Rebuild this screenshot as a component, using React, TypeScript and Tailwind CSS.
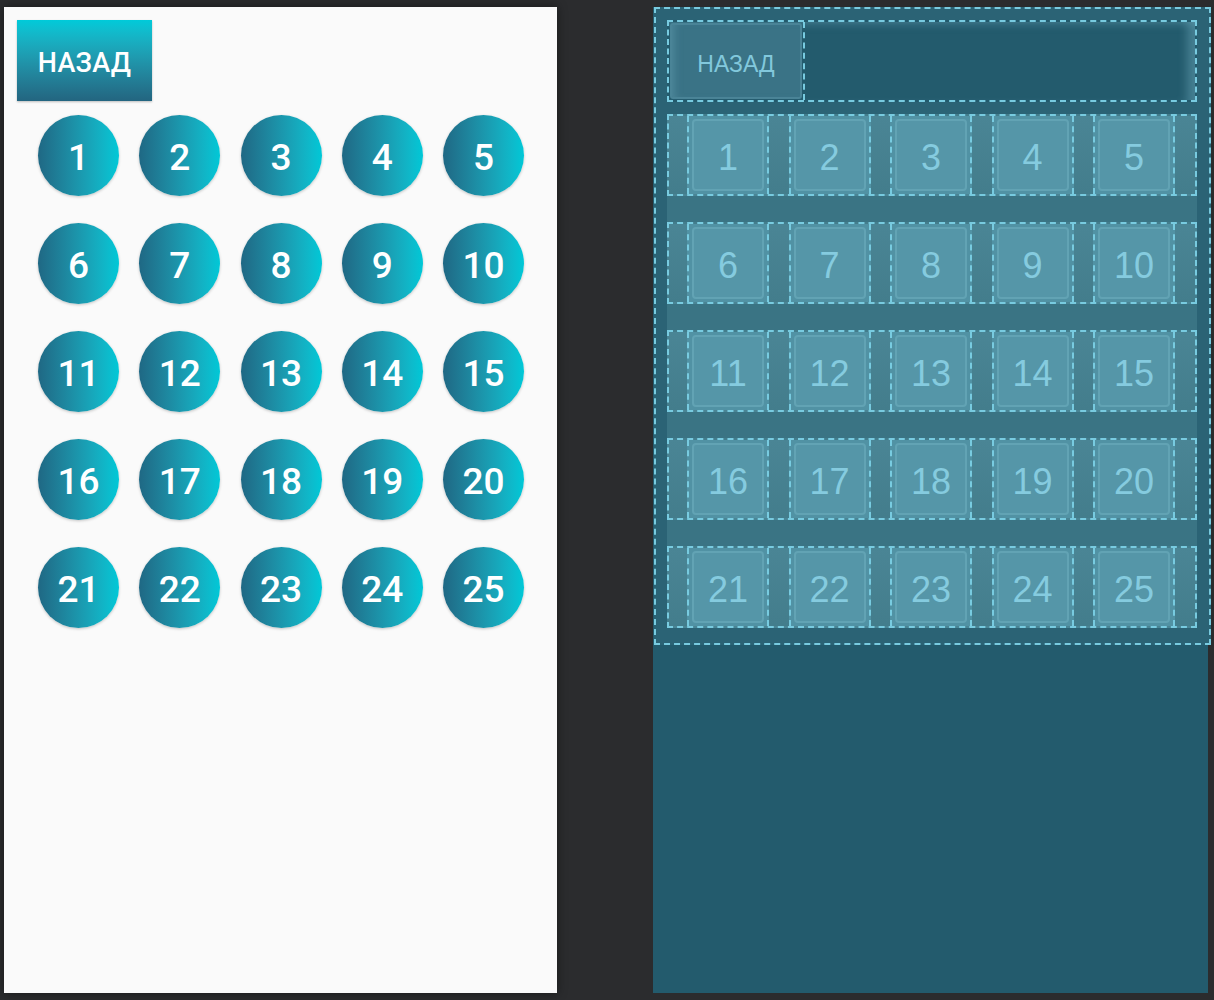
import React from "react";

const rows = [0, 1, 2, 3, 4].map((r) => [1, 2, 3, 4, 5].map((c) => r * 5 + c));

export default function App() {
  return (
    <div className="w-[1214px] h-[1000px] bg-[#2b2c2e] flex items-start pt-[7px] pl-[4px] overflow-hidden">
      {/* Design view */}
      <div
        className="w-[553px] h-[986px] shrink-0 bg-[#fafafa] shadow-[0_0_10px_rgba(0,0,0,0.45)] flex flex-col items-start pt-[13px] pl-[13px]"
        style={{ fontFamily: "Roboto, 'Noto Sans', sans-serif" }}
      >
        <div className="w-[135px] h-[81px] bg-linear-to-b from-[#00cad9] to-[#236580] text-white text-[27px] font-medium flex items-center justify-center pt-[5px] shadow-[0_1px_2px_rgba(0,0,0,0.25)] tracking-[0.3px]">
          НАЗАД
        </div>
        <div className="mt-[14px] flex flex-col gap-[27px] pl-[21px]">
          {rows.map((row, i) => (
            <div key={i} className="flex gap-[20.25px]">
              {row.map((n) => (
                <div
                  key={n}
                  className="w-[81px] h-[81px] rounded-full bg-linear-to-r from-[#1f6884] to-[#00c8d7] text-white text-[37px] font-medium flex items-center justify-center pt-[5px] shadow-[0_1px_3px_rgba(0,0,0,0.22)]"
                >
                  {n}
                </div>
              ))}
            </div>
          ))}
        </div>
      </div>

      {/* Blueprint view */}
      <div
        className="ml-[96px] w-[555px] h-[986px] shrink-0 bg-[#235b6d]"
        style={{ fontFamily: "'Liberation Sans', Arial, sans-serif" }}
      >
        <div className="ml-[1px] w-[557px] h-[638px] border-2 border-dashed border-[#78cbe0] bg-[#2b6375] p-[11px] flex flex-col gap-[12px]">
          {/* top row */}
          <div className="w-[530px] h-[82px] border-2 border-dashed border-[#78cbe0] bg-[#235b6d] shadow-[inset_-14px_0_10px_-6px_rgba(110,170,190,0.45),inset_0_8px_8px_-6px_rgba(110,170,190,0.4)] flex">
            <div className="w-[136px] h-full border-r-2 border-dashed border-[#78cbe0] p-[1px]">
              <div className="w-full h-full rounded-[3px] border-2 border-[#4a8497] bg-[#3a7386] text-[#82c8dc] text-[23px] flex items-center justify-center pt-[6px] shadow-[inset_8px_0_8px_-6px_rgba(120,180,200,0.35)]">
                НАЗАД
              </div>
            </div>
          </div>
          {/* grid */}
          <div className="w-[530px] h-[514px] bg-[#3a7484] flex flex-col gap-[26px]">
            {rows.map((row, i) => (
              <div
                key={i}
                className="w-[530px] h-[82px] border-2 border-dashed border-[#78cbe0] bg-linear-to-b from-[#4a8595] to-[#437d8c] flex pl-[18px] gap-[19.5px]"
              >
                {row.map((n) => (
                  <div
                    key={n}
                    className="w-[82px] h-full border-x-2 border-dashed border-[#78cbe0] bg-[#5192a4] p-[3px]"
                  >
                    <div className="w-full h-full rounded-[4px] border-2 border-[#62a3b4] bg-[#5596a8] text-[#85cbdf] text-[36px] flex items-center justify-center pt-[5px]">
                      {n}
                    </div>
                  </div>
                ))}
              </div>
            ))}
          </div>
        </div>
      </div>
    </div>
  );
}
